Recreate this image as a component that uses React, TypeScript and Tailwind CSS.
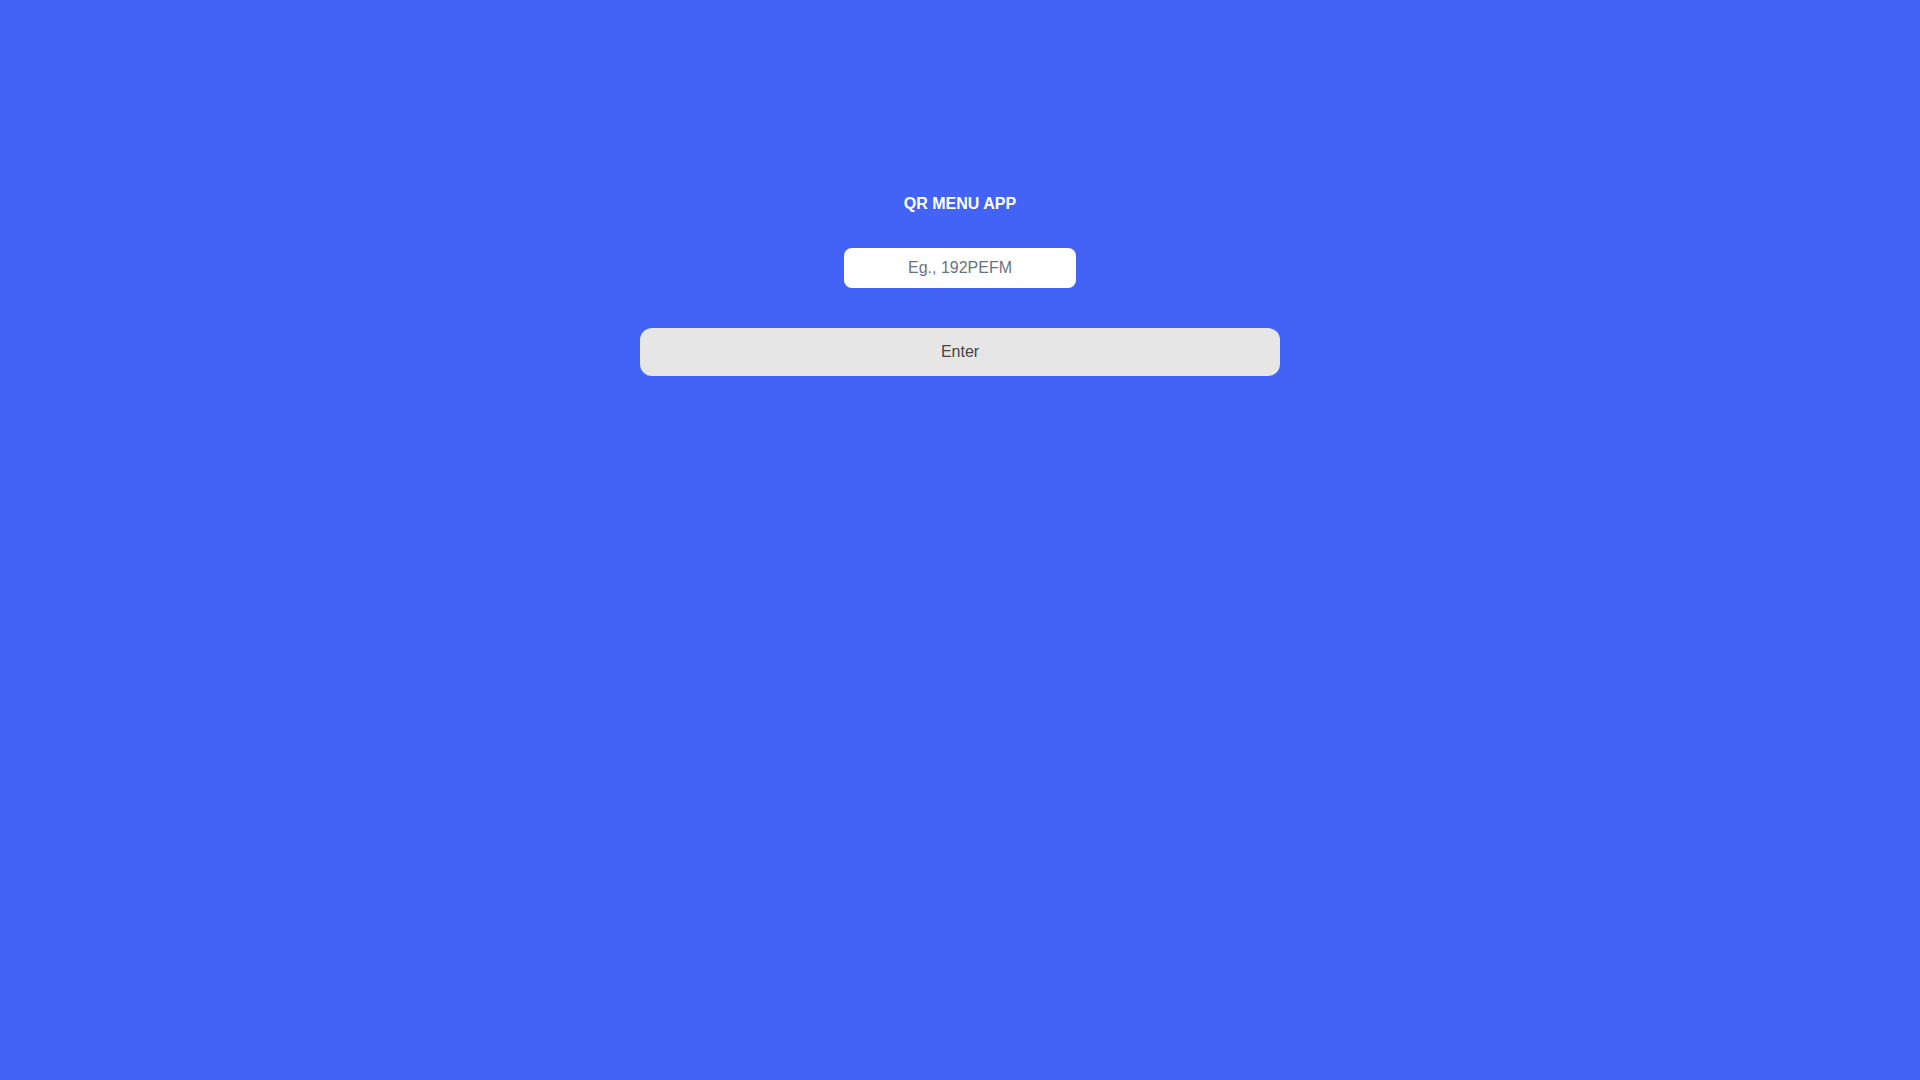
export default function App() {
  return (
    <div className="min-h-screen w-full bg-[#4263f6] font-['Liberation_Sans',Arial,sans-serif]">
      <div className="flex flex-col items-center pt-[192px]">
        <h1 className="text-base leading-6 font-bold text-white">QR MENU APP</h1>
        <input
          type="text"
          placeholder="Eg., 192PEFM"
          className="mt-8 h-10 w-[232px] rounded-lg bg-white text-center text-base text-gray-800 placeholder:text-gray-500 outline-none"
        />
        <button className="mt-10 h-12 w-[640px] rounded-xl bg-[#e6e6e6] text-base text-[#444444]">
          Enter
        </button>
      </div>
    </div>
  );
}
